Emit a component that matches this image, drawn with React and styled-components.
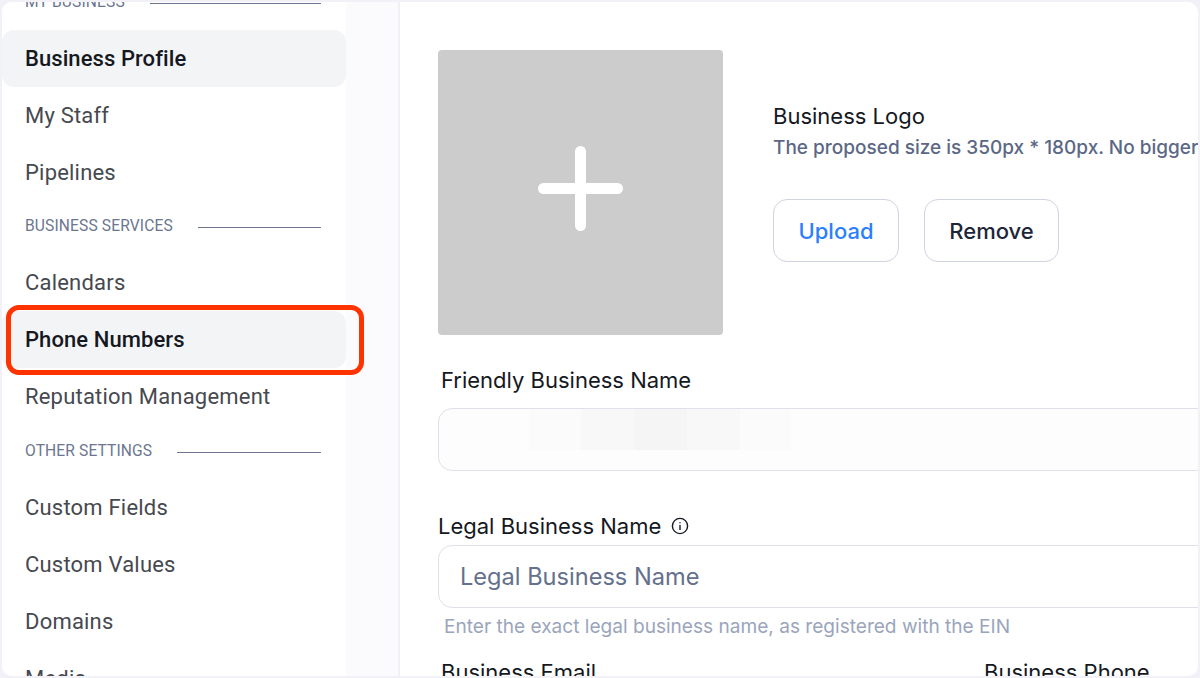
import React from "react";
import styled, { createGlobalStyle } from "styled-components";

const Global = createGlobalStyle`
  html, body { margin: 0; padding: 0; background: #f1f1f7; }
  * { box-sizing: border-box; }
`;

const Frame = styled.div`
  display: flex;
  width: 1196px;
  height: 674px;
  margin: 2px;
  background: #fff;
  border-radius: 10px;
  overflow: hidden;
`;

const Sidebar = styled.aside`
  display: flex;
  flex: 0 0 398px;
  background: #fbfbfd;
  border-right: 2px solid #f0f0f6;
`;

const Nav = styled.nav`
  width: 344px;
  margin-top: -25px;
  background: #fff;
  font-family: Roboto, sans-serif;
`;

const Section = styled.div`
  display: flex;
  align-items: center;
  height: ${(p) => p.$h || 53}px;
  padding: 0 25px 0 23px;
  font-size: 15.6px;
  color: #6b7690;
  letter-spacing: 0.12px;
`;

const SectionText = styled.span`
  padding-bottom: 3px;
`;

const SectionLine = styled.span`
  flex: 1;
  height: 1px;
  margin-left: 25px;
  background: #6b7690;
`;

const Row = styled.div`
  position: relative;
  display: flex;
  align-items: center;
  height: 57px;
  padding-left: 23px;
  border-radius: 12px;
  font-size: 22px;
  letter-spacing: ${(p) => (p.$active ? "0.08px" : "0.2px")};
  font-weight: ${(p) => (p.$active ? 500 : 400)};
  color: ${(p) => (p.$active ? "#15181e" : "#46494f")};
  background: ${(p) => (p.$active ? "#f3f4f6" : "transparent")};
`;

const Highlight = styled.span`
  position: absolute;
  top: -6px;
  left: 4px;
  width: 358px;
  height: 70px;
  border: 5px solid #ff3300;
  border-radius: 13px;
`;

const Main = styled.main`
  flex: 1;
  min-width: 0;
  padding: 48px 0 0 38px;
  overflow: hidden;
  font-family: Inter, sans-serif;
`;

const LogoRow = styled.div`
  display: flex;
  align-items: flex-start;
  gap: 50px;
  width: 900px;
`;

const LogoBox = styled.div`
  display: flex;
  align-items: center;
  justify-content: center;
  flex: 0 0 285px;
  height: 285px;
  padding-bottom: 9px;
  background: #cccccc;
  border-radius: 4px;
`;

const LogoInfo = styled.div`
  padding-top: 52px;
  white-space: nowrap;
`;

const LogoTitle = styled.div`
  font-size: 22px;
  line-height: 28px;
  color: #15181e;
`;

const LogoHint = styled.div`
  margin-top: 4px;
  font-size: 19px;
  line-height: 28px;
  font-weight: 500;
  color: #5b6885;
`;

const Buttons = styled.div`
  display: flex;
  gap: 25px;
  margin-top: 37px;
`;

const Button = styled.button`
  width: ${(p) => p.$w}px;
  height: 63px;
  padding: 0;
  background: #fff;
  border: 1px solid #d0d3e0;
  border-radius: 14px;
  font-family: Inter, sans-serif;
  font-size: 22px;
  font-weight: 500;
  color: ${(p) => p.$color};
`;

const Label = styled.div`
  display: flex;
  align-items: center;
  gap: 10px;
  margin-top: ${(p) => p.$mt}px;
  margin-left: ${(p) => p.$ml || 0}px;
  font-size: 22px;
  line-height: 28px;
  color: #15181e;
  white-space: nowrap;
`;

const Field = styled.div`
  display: flex;
  align-items: center;
  width: 900px;
  height: 63px;
  margin-top: ${(p) => p.$mt}px;
  padding-left: 21px;
  background: #fff;
  border: 1px solid #dfe1ea;
  border-radius: 14px;
  font-size: 23.6px;
  color: #64708c;
`;

const BlurredField = styled(Field)`
  background-color: #fdfdfe;
  background-image: linear-gradient(
    90deg,
    #fdfdfd 0 90px,
    #fbfbfc 90px 142px,
    #f8f8f9 142px 195px,
    #f5f5f6 195px 248px,
    #f8f8f9 248px 301px,
    #fbfbfc 301px 352px,
    transparent 352px
  );
  background-size: 100% 41px;
  background-repeat: no-repeat;
`;

const Help = styled.div`
  margin: 7px 0 0 6px;
  font-size: 19.08px;
  line-height: 24px;
  color: #9aa5bc;
  white-space: nowrap;
`;

const TwoLabels = styled.div`
  display: flex;
  margin-top: 19px;
  margin-left: 3px;
  font-size: 22px;
  line-height: 28px;
  color: #15181e;
`;

const LabelCell = styled.div`
  flex: 0 0 543px;
  white-space: nowrap;
`;

const rows1 = ["Business Profile", "My Staff", "Pipelines"];
const rows2 = ["Calendars", "Phone Numbers", "Reputation Management"];
const rows3 = ["Custom Fields", "Custom Values", "Domains", "Media"];

export default function App() {
  return (
    <>
      <Global />
      <Frame>
        <Sidebar>
          <Nav>
            <Section><SectionText>MY BUSINESS</SectionText><SectionLine /></Section>
            {rows1.map((r, i) => (
              <Row key={r} $active={i === 0}>{r}</Row>
            ))}
            <Section><SectionText>BUSINESS SERVICES</SectionText><SectionLine /></Section>
            {rows2.map((r, i) => (
              <Row key={r} $active={i === 1}>
                {r}
                {i === 1 && <Highlight />}
              </Row>
            ))}
            <Section $h={54}><SectionText>OTHER SETTINGS</SectionText><SectionLine /></Section>
            {rows3.map((r) => (
              <Row key={r}>{r}</Row>
            ))}
          </Nav>
        </Sidebar>
        <Main>
          <LogoRow>
            <LogoBox>
              <svg width="85" height="85" viewBox="0 0 85 85" fill="none">
                <path d="M5.5 42.5H79.5M42.5 5.5V79.5" stroke="#fff" strokeWidth="11" strokeLinecap="round" />
              </svg>
            </LogoBox>
            <LogoInfo>
              <LogoTitle>Business Logo</LogoTitle>
              <LogoHint>The proposed size is 350px * 180px. No bigger than 2.5 MB</LogoHint>
              <Buttons>
                <Button $w={126} $color="#2b7fff">Upload</Button>
                <Button $w={135} $color="#1d2639">Remove</Button>
              </Buttons>
            </LogoInfo>
          </LogoRow>
          <Label $mt={31} $ml={3}>Friendly Business Name</Label>
          <BlurredField $mt={14} />
          <Label $mt={41}>
            Legal Business Name
            <svg width="18" height="18" viewBox="0 0 18 18" fill="none" stroke="#15181e" strokeWidth="1.4" strokeLinecap="round">
              <circle cx="9" cy="9" r="7.6" />
              <path d="M9 8.4V12.4M9 5.6V5.7" />
            </svg>
          </Label>
          <Field $mt={5}>Legal Business Name</Field>
          <Help>Enter the exact legal business name, as registered with the EIN</Help>
          <TwoLabels>
            <LabelCell>Business Email</LabelCell>
            <LabelCell>Business Phone</LabelCell>
          </TwoLabels>
        </Main>
      </Frame>
    </>
  );
}
